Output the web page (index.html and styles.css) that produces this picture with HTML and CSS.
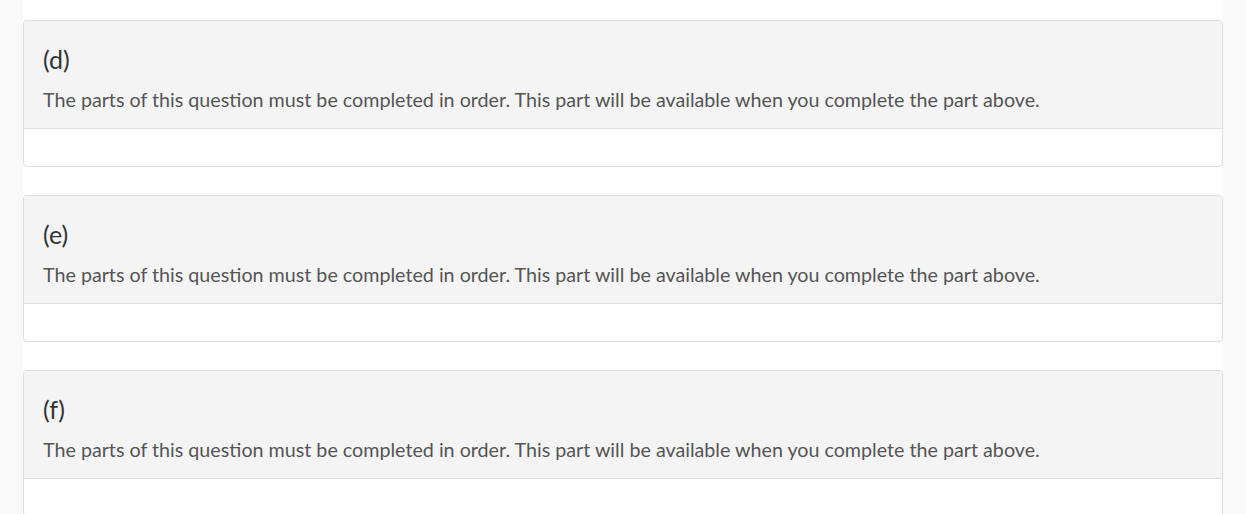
FILE: index.html
```html
<!DOCTYPE html>
<html>
<head>
<meta charset="utf-8">
<link rel="stylesheet" href="styles.css">
</head>
<body>
<main class="container">
  <section class="part">
    <div class="part-head">
      <h3 class="part-label">(d)</h3>
      <p class="part-note">The parts of this question must be completed in order. This part will be available when you complete the part above.</p>
    </div>
    <div class="part-body"></div>
  </section>
  <section class="part">
    <div class="part-head">
      <h3 class="part-label">(e)</h3>
      <p class="part-note">The parts of this question must be completed in order. This part will be available when you complete the part above.</p>
    </div>
    <div class="part-body"></div>
  </section>
  <section class="part">
    <div class="part-head">
      <h3 class="part-label">(f)</h3>
      <p class="part-note">The parts of this question must be completed in order. This part will be available when you complete the part above.</p>
    </div>
    <div class="part-body"></div>
  </section>
</main>
</body>
</html>
```
FILE: styles.css
```css
html, body {
  margin: 0;
  padding: 0;
  background: #f9f9f9;
  font-family: Lato, "Open Sans", sans-serif;
}
.container {
  width: 1200px;
  margin: 0 auto;
  background: #ffffff;
  padding-top: 20px;
  min-height: 514px;
  box-sizing: border-box;
}
.part {
  border: 1px solid #dddddd;
  border-radius: 4px;
  margin-bottom: 28px;
  background: #ffffff;
  overflow: hidden;
}
.part-head {
  background: #f4f4f4;
  border-bottom: 1px solid #dddddd;
  padding: 24px 19px 16px;
}
.part-label {
  margin: 0 0 15px;
  font-size: 25px;
  font-weight: 400;
  line-height: 28px;
  color: #333333;
}
.part-note {
  margin: 0;
  font-size: 19.7px;
  line-height: 24px;
  color: #555555;
}
.part-body {
  height: 37px;
}
```
